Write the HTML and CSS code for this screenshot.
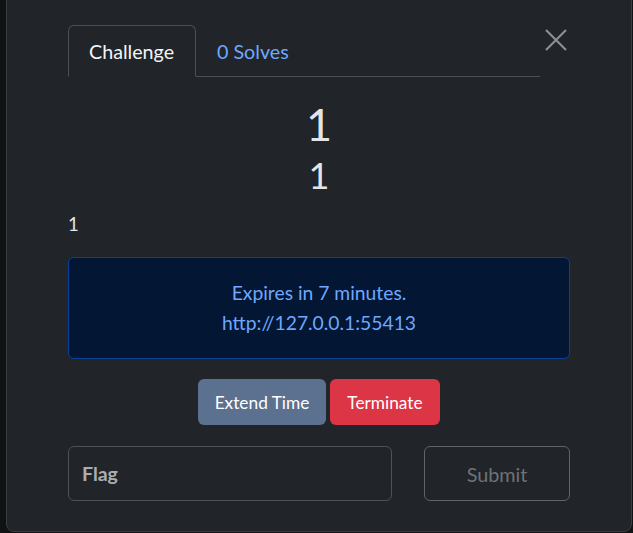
FILE: index.html
```html
<!DOCTYPE html>
<html>
<head>
<meta charset="utf-8">
<link rel="stylesheet" href="styles.css">
</head>
<body>
<div class="modal">
  <div class="header">
    <ul class="tabs">
      <li class="tab active">Challenge</li>
      <li class="tab link">0 Solves</li>
    </ul>
    <button class="close" aria-label="Close">
      <svg width="22" height="22" viewBox="0 0 22 22"><path d="M1 1 L21 21 M21 1 L1 21" stroke="#8b8e92" stroke-width="2.2" fill="none"/></svg>
    </button>
  </div>
  <div class="body">
    <h2 class="name">1</h2>
    <h3 class="value">1</h3>
    <p class="desc">1</p>
    <div class="alert">
      <div>Expires in 7 minutes.</div>
      <div>http://127.0.0.1:55413</div>
    </div>
    <div class="actions">
      <button class="btn extend">Extend Time</button>
      <button class="btn terminate">Terminate</button>
    </div>
    <div class="submit-row">
      <input class="flag" type="text" placeholder="Flag">
      <button class="submit">Submit</button>
    </div>
  </div>
</div>
</body>
</html>
```

FILE: styles.css
```css
* { box-sizing: border-box; }
html, body { margin: 0; padding: 0; }
body {
  background: #101214;
  font-family: Lato, "Liberation Sans", sans-serif;
  overflow: hidden;
  height: 533px;
}
.modal {
  margin-left: 6px;
  margin-top: -20px;
  width: 626px;
  height: 552px;
  background: #212529;
  border: 1px solid #3a3e42;
  border-radius: 8px;
  padding: 44px 61px 0 61px;
  color: #dee2e6;
}
.header {
  display: flex;
  align-items: flex-start;
}
.tabs {
  list-style: none;
  margin: 0;
  padding: 0;
  display: flex;
  width: 472px;
  border-bottom: 1px solid #4b5056;
}
.tab {
  height: 52px;
  padding: 0 20px;
  display: flex;
  align-items: center;
  font-size: 19.7px;
  border: 1px solid transparent;
  border-radius: 6px 6px 0 0;
  margin-bottom: -1px;
}
.tab.active {
  color: #f3f4f5;
  border-color: #4b5056;
  border-bottom-color: #212529;
  width: 128px;
}
.tab.link { color: #6ea8fe; }
.close {
  background: none;
  border: 0;
  padding: 0;
  margin: 4px 0 0 5px;
  width: 22px;
  height: 22px;
  display: flex;
}
.body { text-align: center; }
.name {
  margin: 20px 0 0;
  font-size: 45px;
  font-weight: 400;
  line-height: 54px;
  color: #e2e5e8;
}
.value {
  margin: 2px 0 0;
  font-size: 36px;
  font-weight: 400;
  line-height: 44px;
  color: #e2e5e8;
}
.desc {
  text-align: left;
  margin: 14px 0 0;
  font-size: 18.5px;
  line-height: 26px;
  color: #e2e5e8;
}
.alert {
  margin-top: 20px;
  height: 102px;
  background: #031633;
  border: 1px solid #084298;
  border-radius: 6px;
  color: #6ea8fe;
  font-size: 19.3px;
  line-height: 30px;
  display: flex;
  flex-direction: column;
  justify-content: center;
}
.actions {
  margin-top: 20px;
  display: flex;
  justify-content: center;
  gap: 4px;
}
.btn {
  height: 46px;
  border: 0;
  border-radius: 6px;
  color: #fff;
  font-family: Lato, "Liberation Sans", sans-serif;
  font-size: 17.3px;
  padding: 0 16px;
}
.extend { background: #5c718f; width: 128px; }
.terminate { background: #dc3545; width: 110px; }
.submit-row {
  margin-top: 21px;
  display: flex;
  justify-content: space-between;
}
.flag {
  width: 324px;
  height: 55px;
  background: #212529;
  border: 1px solid #4d5258;
  border-radius: 6px;
  padding: 0 13px;
  font-family: Lato, "Liberation Sans", sans-serif;
  font-size: 19.5px;
  font-weight: 700;
  color: #dee2e6;
}
.flag::placeholder { color: #a9aeb3; }
.submit {
  width: 146px;
  height: 55px;
  background: transparent;
  border: 1px solid #5f6469;
  border-radius: 6px;
  font-family: Lato, "Liberation Sans", sans-serif;
  font-size: 19.8px;
  color: #6c737a;
}
```
